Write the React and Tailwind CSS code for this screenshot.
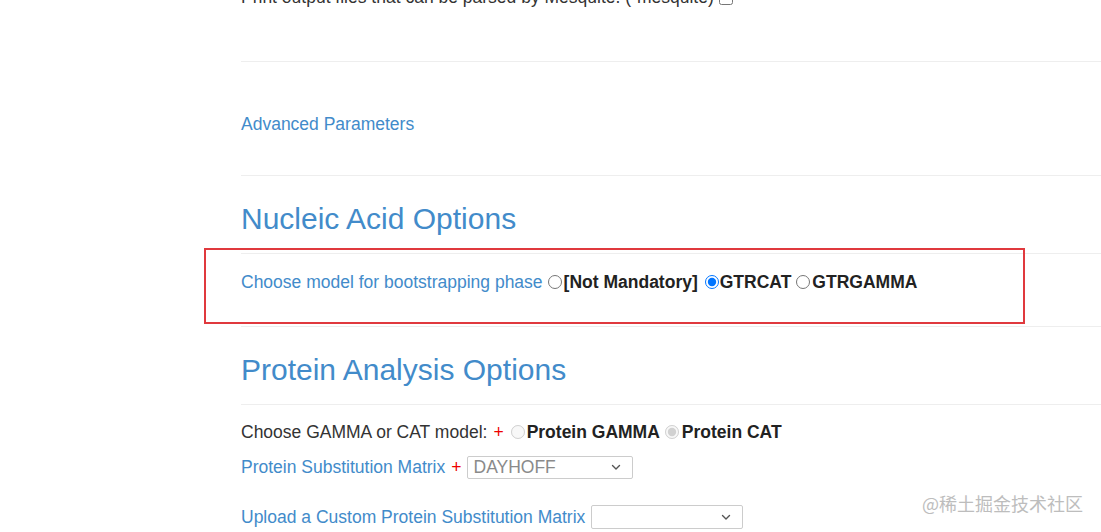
import React from "react";

function Chevron() {
  return (
    <svg width="12" height="12" viewBox="0 0 12 12" className="absolute right-[10px] top-1/2 -translate-y-1/2 pointer-events-none">
      <path d="M2.5 4.5 L6 8 L9.5 4.5" fill="none" stroke="#555" strokeWidth="1.4" strokeLinecap="round" strokeLinejoin="round" />
    </svg>
  );
}

export default function App() {
  const font = { fontFamily: '"Liberation Sans", Arial, sans-serif' };
  return (
    <div className="relative w-[1101px] h-[532px] overflow-hidden bg-white text-[#333] text-[17.5px] leading-[20px]" style={font}>
      <div className="pl-[241px]">
        {/* Top cut-off row */}
        <div className="mt-[-13px] h-[20px] flex items-center whitespace-nowrap">
          <span>Print output files that can be parsed by Mesquite. (-mesquite)</span>
          <input type="checkbox" className="ml-[5px] w-[14px] h-[14px] m-0 mt-[2px]" readOnly />
        </div>
        <div className="h-[54px]" />
        <div className="border-t border-[#eeeeee]" />

        <div className="mt-[52px] h-[20px] text-[#428bca]">Advanced Parameters</div>
        <div className="h-[41px]" />
        <div className="border-t border-[#eeeeee]" />

        <h2 className="mt-[26px] text-[30px] leading-[33px] text-[#428bca]">Nucleic Acid Options</h2>
        <div className="h-[18px]" />
        <div className="border-t border-[#eeeeee]" />

        <div className="mt-[18px] h-[20px] flex items-center whitespace-nowrap">
          <span className="text-[#428bca]">Choose model for bootstrapping phase</span>
          <input type="radio" name="boot" className="m-0 ml-[5px] mr-[2px] w-[14px] h-[14px]" readOnly />
          <b className="text-[#222]">[Not Mandatory]</b>
          <input type="radio" name="boot" defaultChecked className="m-0 ml-[7px] mr-[1px] w-[14px] h-[14px]" />
          <b className="text-[#222]">GTRCAT</b>
          <input type="radio" name="boot" className="m-0 ml-[5px] mr-[2px] w-[14px] h-[14px]" readOnly />
          <b className="text-[#222]">GTRGAMMA</b>
        </div>
        <div className="h-[34px]" />
        <div className="border-t border-[#eeeeee]" />

        <h2 className="mt-[26px] text-[30px] leading-[33px] text-[#428bca]">Protein Analysis Options</h2>
        <div className="h-[18px]" />
        <div className="border-t border-[#eeeeee]" />

        <div className="mt-[17px] h-[20px] flex items-center whitespace-nowrap">
          <span>Choose GAMMA or CAT model:</span>
          <span className="ml-[6px] text-[#e00]">+</span>
          <input type="radio" name="prot" disabled className="m-0 ml-[7px] mr-[2px] w-[14px] h-[14px]" />
          <b className="text-[#222]">Protein GAMMA</b>
          <input type="radio" name="prot" disabled defaultChecked className="m-0 ml-[5px] mr-[3px] w-[14px] h-[14px]" />
          <b className="text-[#222]">Protein CAT</b>
        </div>

        <div className="mt-[14px] h-[22px] flex items-center whitespace-nowrap">
          <span className="text-[#428bca]">Protein Substitution Matrix</span>
          <span className="ml-[6px] text-[#e00]">+</span>
          <div className="relative ml-[5px] w-[166px] h-[23px] border border-[#cccccc] rounded-[2px] bg-white">
            <span className="absolute left-[6px] top-1/2 -translate-y-1/2 text-[17.5px] text-[#8a8a8a]">DAYHOFF</span>
            <Chevron />
          </div>
        </div>

        <div className="mt-[27px] h-[24px] flex items-center whitespace-nowrap">
          <span className="text-[#428bca]">Upload a Custom Protein Substitution Matrix</span>
          <div className="relative ml-[6px] w-[152px] h-[24px] border border-[#cccccc] rounded-[2px] bg-white">
            <Chevron />
          </div>
        </div>
      </div>

      {/* Red annotation box overlay */}
      <div className="absolute left-[204px] top-[248px] w-[821px] h-[76px] border-2 border-[#e0393e]" />

      {/* Watermark overlay */}
      <div
        className="absolute left-[922px] top-[491px] text-[18px] leading-[24px] text-[#bdbdbd] whitespace-nowrap"
        style={{ fontFamily: '"Noto Sans CJK SC", "Noto Sans", sans-serif' }}
      >
        @稀土掘金技术社区
      </div>
    </div>
  );
}
